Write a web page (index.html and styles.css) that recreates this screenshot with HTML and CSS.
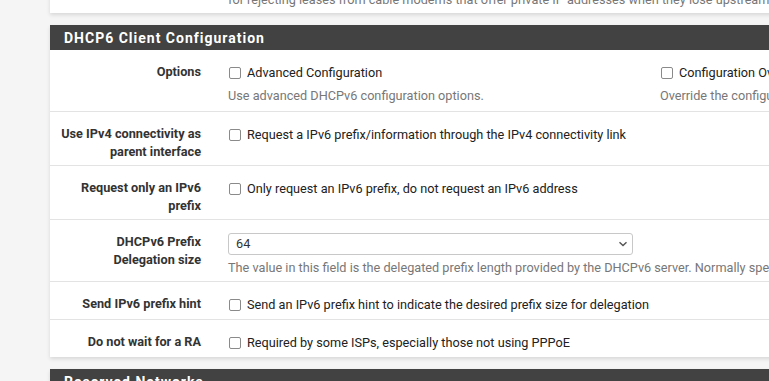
FILE: index.html
```html
<!DOCTYPE html>
<html lang="en">
<head>
  <meta charset="UTF-8" />
  <title>Interfaces: WAN</title>
  <meta name="viewport" content="width=device-width, initial-scale=1.0">
  <link rel="stylesheet" href="styles.css">
</head>
<body>
  <div class="page">

    <section class="panel panel-prev">
      <div class="form-row">
        <div class="form-label"></div>
        <div class="form-field">
          <p class="help">for rejecting leases from cable modems that offer private IP addresses when they lose upstream sync.</p>
        </div>
      </div>
    </section>

    <section class="panel">
      <h2 class="panel-heading">DHCP6 Client Configuration</h2>
      <div class="panel-body">

        <div class="form-row">
          <div class="form-label">Options</div>
          <div class="form-field split">
            <div>
              <label class="check"><span class="box"></span>Advanced Configuration</label>
              <p class="help">Use advanced DHCPv6 configuration options.</p>
            </div>
            <div>
              <label class="check"><span class="box"></span>Configuration Override</label>
              <p class="help">Override the configuration from this file.</p>
            </div>
          </div>
        </div>

        <div class="form-row">
          <div class="form-label">Use IPv4 connectivity as parent interface</div>
          <div class="form-field">
            <label class="check"><span class="box"></span>Request a IPv6 prefix/information through the IPv4 connectivity link</label>
          </div>
        </div>

        <div class="form-row">
          <div class="form-label">Request only an IPv6 prefix</div>
          <div class="form-field">
            <label class="check"><span class="box"></span>Only request an IPv6 prefix, do not request an IPv6 address</label>
          </div>
        </div>

        <div class="form-row">
          <div class="form-label">DHCPv6 Prefix Delegation size</div>
          <div class="form-field">
            <div class="select">
              <span>64</span>
              <svg width="10" height="6" viewBox="0 0 10 6"><path d="M1.5 1.2 L5 4.6 L8.5 1.2" fill="none" stroke="#555" stroke-width="1.4"/></svg>
            </div>
            <p class="help">The value in this field is the delegated prefix length provided by the DHCPv6 server. Normally specified by the ISP.</p>
          </div>
        </div>

        <div class="form-row">
          <div class="form-label">Send IPv6 prefix hint</div>
          <div class="form-field">
            <label class="check"><span class="box"></span>Send an IPv6 prefix hint to indicate the desired prefix size for delegation</label>
          </div>
        </div>

        <div class="form-row">
          <div class="form-label">Do not wait for a RA</div>
          <div class="form-field">
            <label class="check"><span class="box"></span>Required by some ISPs, especially those not using PPPoE</label>
          </div>
        </div>

      </div>
    </section>

    <section class="panel">
      <h2 class="panel-heading">Reserved Networks</h2>
    </section>

  </div>
</body>
</html>
```

FILE: styles.css
```css
html, body {
  margin: 0;
  padding: 0;
}
body {
  font-family: Roboto, "Liberation Sans", sans-serif;
  font-size: 12.7px;
  color: #212121;
  background: #f5f5f5;
  overflow: hidden;
  width: 769px;
  height: 381px;
}
.page {
  padding-left: 50px;
  margin-top: -18px;
  width: 1200px;
}
.panel {
  background: white;
  margin-bottom: 12px;
  box-shadow: 0 2px 4px rgba(0,0,0,0.12);
}
.panel-prev .form-row {
  padding-top: 8px;
  padding-bottom: 4px;
}
.panel-heading {
  margin: 0;
  height: 25px;
  line-height: 26px;
  padding-left: 14px;
  background: #424242;
  color: white;
  font-size: 14px;
  font-weight: bold;
  letter-spacing: 1px;
}
.form-row {
  display: grid;
  grid-template-columns: 151px 1fr;
  border-top: 1px solid #e3e3e3;
  padding: 13px 0 4px;
  line-height: 18px;
}
.panel-body .form-row:first-child {
  border-top: none;
}
.form-label {
  padding-left: 5px;
  text-align: right;
  font-weight: bold;
  color: #333;
}
.form-field {
  padding-left: 27px;
}
.split {
  display: grid;
  grid-template-columns: 432px 432px;
  padding-bottom: 2px;
}
.check {
  display: flex;
  align-items: center;
  gap: 6px;
  height: 20px;
  color: #212121;
}
.box {
  width: 10px;
  height: 10px;
  border: 1px solid #8a8a8a;
  border-radius: 2px;
  margin-left: 1px;
  background: white;
}
.help {
  margin: 4px 0 0;
  color: #777;
}
.panel-prev .help {
  margin: 0;
}
.select {
  width: 392px;
  height: 20px;
  border: 1px solid #c8c8c8;
  border-radius: 3px;
  display: flex;
  align-items: center;
  justify-content: space-between;
  padding: 0 4px 0 7px;
}
.select span {
  color: #333;
}
```
